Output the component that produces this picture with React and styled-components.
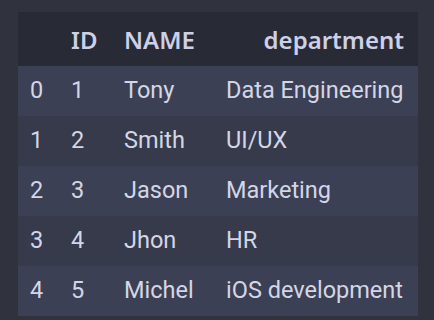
import React from "react";
import styled, { createGlobalStyle } from "styled-components";

const Global = createGlobalStyle`
  html, body { margin: 0; padding: 0; background: #30333e; }
  body { font-family: Roboto, "Noto Sans", sans-serif; }
`;

const Page = styled.div`
  width: 434px;
  height: 320px;
  padding: 12px 16px 0 18px;
  box-sizing: border-box;
  background: #30333e;
`;

const Table = styled.table`
  width: 400px;
  border-collapse: collapse;
  table-layout: fixed;
  color: #d6d8e8;
`;

const HeadRow = styled.tr`
  background: #282b36;
  height: 54px;
`;

const Th = styled.th`
  padding: 0 ${(p) => (p.$right ? "14px" : "0")} 0 12px;
  text-align: ${(p) => (p.$right ? "right" : "left")};
  font-family: "Noto Sans", Roboto, sans-serif;
  font-size: 24px;
  font-weight: 600;
  color: #cdd0e6;
`;

const Row = styled.tr`
  height: 50px;
  background: ${(p) => (p.$odd ? "#363a4b" : "#3c4054")};
`;

const Td = styled.td`
  padding: 0 0 2px 12px;
  font-size: 23.5px;
  font-weight: 400;
  white-space: nowrap;
  color: #d4d6e6;
`;

const rows = [
  [1, "Tony", "Data Engineering"],
  [2, "Smith", "UI/UX"],
  [3, "Jason", "Marketing"],
  [4, "Jhon", "HR"],
  [5, "Michel", "iOS development"],
];

export default function App() {
  return (
    <>
      <Global />
      <Page>
        <Table>
          <colgroup>
            <col style={{ width: 41 }} />
            <col style={{ width: 53 }} />
            <col style={{ width: 102 }} />
            <col style={{ width: 204 }} />
          </colgroup>
          <thead>
            <HeadRow>
              <Th />
              <Th>ID</Th>
              <Th>NAME</Th>
              <Th $right>department</Th>
            </HeadRow>
          </thead>
          <tbody>
            {rows.map((r, i) => (
              <Row key={i} $odd={i % 2 === 1}>
                <Td>{i}</Td>
                <Td>{r[0]}</Td>
                <Td>{r[1]}</Td>
                <Td>{r[2]}</Td>
              </Row>
            ))}
          </tbody>
        </Table>
      </Page>
    </>
  );
}
